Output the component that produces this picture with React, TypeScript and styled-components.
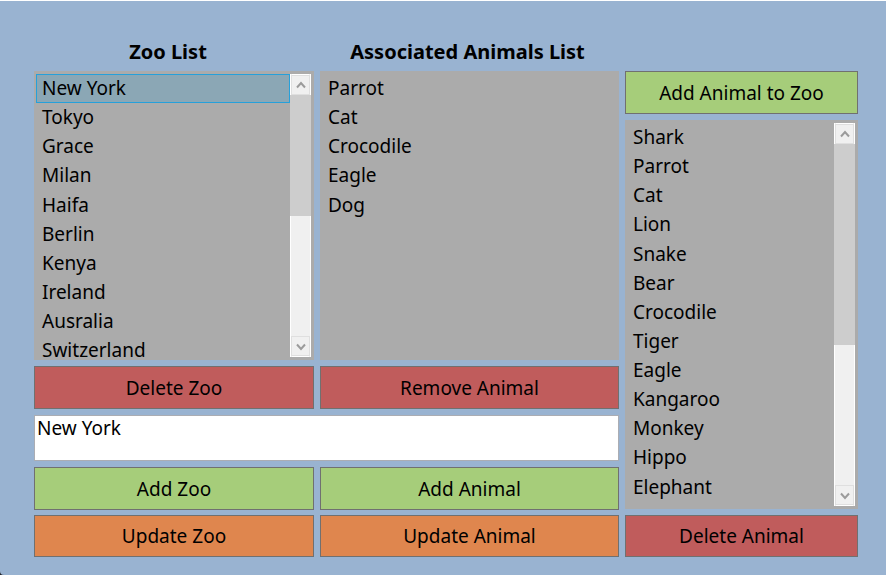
import React, { useRef, useState } from 'react';
import styled, { createGlobalStyle } from 'styled-components';

const GlobalStyle = createGlobalStyle`
  * { box-sizing: border-box; }
  body {
    margin: 0;
    background: #20242c;
    color: #000;
    font-family: Tahoma, 'Noto Sans', sans-serif;
    font-size: 19px;
  }
  button, textarea { font: inherit; color: inherit; }
`;

const tones = { green: '#a6cd7a', red: '#c05c5c', orange: '#df864e' };

const Window = styled.main`
  display: grid;
  grid-template-columns: minmax(0, 585fr) minmax(0, 233fr);
  column-gap: 6px;
  height: 100vh;
  min-height: 420px;
  padding: 38px 28px 18px 34px;
  border-top: 1px solid #fff;
  border-bottom-left-radius: 4px;
  background: #99b3d1;
`;

const Side = styled.div`
  display: flex;
  flex-direction: column;
  gap: 6px;
  min-height: 0;
`;

const AnimalSide = styled(Side)`
  padding-top: 32px;
`;

const Pair = styled.div<{ $grow?: boolean }>`
  display: grid;
  grid-template-columns: minmax(0, 280fr) minmax(0, 299fr);
  grid-template-rows: minmax(0, 1fr);
  column-gap: 6px;
  flex: ${(p) => (p.$grow ? '1 1 0' : '0 0 auto')};
  min-height: 0;
`;

const ListGroup = styled.section`
  display: flex;
  flex-direction: column;
  min-width: 0;
  min-height: 0;
`;

const Heading = styled.h2`
  flex: none;
  margin: 0;
  padding: 0 12px 0 0;
  height: 32px;
  font-size: 20px;
  font-weight: 700;
  line-height: 25px;
  text-align: center;
  white-space: nowrap;
`;

const WideHeading = styled(Heading)`
  padding: 0 4px 0 0;
`;

const ListFrame = styled.div`
  display: flex;
  flex: 1 1 0;
  min-height: 0;
  padding: 2px;
  border: 1px solid #ababab;
  border-width: 1px 1px 1px 0;
  background: #ababab;
`;

const Items = styled.ul`
  flex: 1;
  min-width: 0;
  margin: 0;
  padding: 0;
  overflow: hidden;
  list-style: none;
`;

const Item = styled.li<{ $selected: boolean }>`
  height: 29px;
  padding: 0 5px;
  border: 1px solid ${(p) => (p.$selected ? '#26a0da' : 'transparent')};
  background: ${(p) => (p.$selected ? '#8ba7b5' : 'transparent')};
  line-height: 27px;
  white-space: nowrap;
  cursor: default;

  &:nth-child(8n + 4) { height: 30px; }
`;

const Bar = styled.div`
  display: flex;
  flex: none;
  flex-direction: column;
  width: 21px;
  border: 1px solid #fff;
  border-width: 0 1px;
  background: #f0f0f0;
`;

const Arrow = styled.button`
  display: grid;
  place-items: center;
  flex: none;
  height: 21px;
  padding: 0;
  border: 1px solid #dfdfdf;
  background: #f0f0f0;

  &:first-child { border-top-color: #fff; box-shadow: inset 0 1px #dfdfdf; }
  &:last-child { border-bottom-color: #fff; box-shadow: inset 0 -1px #dfdfdf; }
`;

const Track = styled.div`
  flex: 1;
  min-height: 0;
`;

const Thumb = styled.div<{ $share: number }>`
  height: ${(p) => p.$share}%;
  margin: 0 -1px;
  background: #cdcdcd;
`;

const Action = styled.button<{ $tone: keyof typeof tones; $low?: boolean }>`
  flex: none;
  width: 100%;
  height: ${(p) => (p.$low ? 42 : 43)}px;
  padding: 0;
  border: 1px solid #707070;
  background: ${(p) => tones[p.$tone]};
  line-height: 24px;
  white-space: nowrap;
`;

const NameBox = styled.textarea`
  display: block;
  flex: none;
  width: 100%;
  height: 46px;
  padding: 0 2px;
  border: 1px solid #abadb3;
  border-radius: 0;
  outline: none;
  resize: none;
  overflow: hidden;
  background: #fff;
  line-height: 25px;
`;

const LowerRows = styled.div`
  display: flex;
  flex-direction: column;
  gap: 5px;
`;

const Chevron = ({ up }: { up?: boolean }) => (
  <svg width="10" height="8" viewBox="0 0 10 8" fill="none" aria-hidden="true">
    <path d={up ? 'M1 6.5 5 2 9 6.5' : 'M1 1.5 5 6 9 1.5'} stroke="#9b9b9b" strokeWidth="2" />
  </svg>
);

type ListProps = { label: string; items: string[]; initial?: string; thumb?: number };

function ListBox({ label, items, initial, thumb }: ListProps) {
  const [selected, setSelected] = useState(initial);
  const list = useRef<HTMLUListElement>(null);
  const scroll = (dy: number) => list.current?.scrollBy(0, dy);
  return (
    <ListFrame>
      <Items ref={list} role="listbox" aria-label={label} tabIndex={0}>
        {items.map((name) => (
          <Item
            key={name}
            role="option"
            aria-selected={selected === name}
            $selected={selected === name}
            onClick={() => setSelected(name)}
          >
            {name}
          </Item>
        ))}
      </Items>
      {thumb !== undefined && (
        <Bar>
          <Arrow type="button" aria-label={`Scroll ${label} up`} onClick={() => scroll(-29)}>
            <Chevron up />
          </Arrow>
          <Track>
            <Thumb $share={thumb} />
          </Track>
          <Arrow type="button" aria-label={`Scroll ${label} down`} onClick={() => scroll(29)}>
            <Chevron />
          </Arrow>
        </Bar>
      )}
    </ListFrame>
  );
}

const zoos = ['New York', 'Tokyo', 'Grace', 'Milan', 'Haifa', 'Berlin', 'Kenya', 'Ireland', 'Ausralia', 'Switzerland'];
const associated = ['Parrot', 'Cat', 'Crocodile', 'Eagle', 'Dog'];
const animals = [
  'Shark', 'Parrot', 'Cat', 'Lion', 'Snake', 'Bear', 'Crocodile',
  'Tiger', 'Eagle', 'Kangaroo', 'Monkey', 'Hippo', 'Elephant',
];

export default function App() {
  return (
    <>
      <GlobalStyle />
      <Window>
        <Side>
          <Pair $grow>
            <ListGroup>
              <Heading>Zoo List</Heading>
              <ListBox label="Zoo List" items={zoos} initial="New York" thumb={50} />
            </ListGroup>
            <ListGroup>
              <WideHeading>Associated Animals List</WideHeading>
              <ListBox label="Associated Animals List" items={associated} />
            </ListGroup>
          </Pair>
          <Pair>
            <Action $tone="red">Delete Zoo</Action>
            <Action $tone="red">Remove Animal</Action>
          </Pair>
          <NameBox aria-label="Name" defaultValue="New York" spellCheck={false} />
          <LowerRows>
            <Pair>
              <Action $tone="green">Add Zoo</Action>
              <Action $tone="green">Add Animal</Action>
            </Pair>
            <Pair>
              <Action $tone="orange" $low>Update Zoo</Action>
              <Action $tone="orange" $low>Update Animal</Action>
            </Pair>
          </LowerRows>
        </Side>
        <AnimalSide>
          <Action $tone="green">Add Animal to Zoo</Action>
          <ListBox label="Animals" items={animals} thumb={59} />
          <Action $tone="red" $low>Delete Animal</Action>
        </AnimalSide>
      </Window>
    </>
  );
}
